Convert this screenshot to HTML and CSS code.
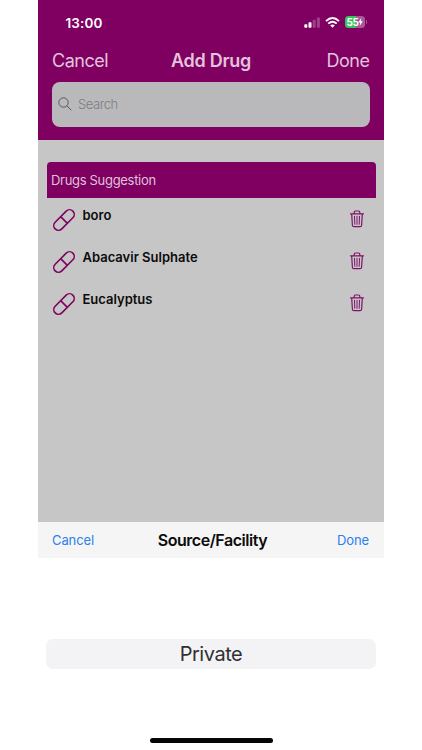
FILE: index.html
```html
<!DOCTYPE html>
<html lang="en">
<head>
<meta charset="utf-8">
<title>Add Drug</title>
<link rel="stylesheet" href="styles.css">
</head>
<body>
<svg class="defs" width="0" height="0" aria-hidden="true">
  <symbol id="pill" viewBox="0 0 24 24">
    <g transform="rotate(-45 12 12)" fill="none" stroke="currentColor" stroke-width="1.6">
      <rect x="-0.5" y="7.300" width="25" height="9.400" rx="4.700"/>
      <path d="M12 7.300v9.400"/>
    </g>
  </symbol>
  <symbol id="trash" viewBox="0 0 16 18">
    <g fill="none" stroke="currentColor" stroke-width="1.2" stroke-linecap="round" stroke-linejoin="round">
      <path d="M1.5 3.8h13M5.2 3.6V2.2Q5.200 1 6.400 1h3.200Q10.800 1 10.800 2.200v1.400M2.700 4l.7 11.200q.1 1.500 1.500 1.500h6.200q1.400 0 1.500-1.500L13.300 4"/>
      <path stroke-width="1" d="M5.500 6.300l.3 8M8 6.300v8M10.500 6.300l-.3 8"/>
    </g>
  </symbol>
</svg>
<main class="phone">
  <header class="header">
    <div class="status">
      <span class="time">13:00</span>
      <div class="indicators">
        <svg class="signal" width="16" height="11" viewBox="0 0 16 11" fill="#fff">
          <rect x="0.300" y="7.300" width="3" height="3.500" rx="0.800"/>
          <rect x="4.500" y="5.300" width="3" height="5.500" rx="0.800"/>
          <rect x="8.700" y="2.800" width="3" height="8" rx="0.800" opacity=".25"/>
          <rect x="12.900" y="0.500" width="3" height="10.300" rx="0.800" opacity=".25"/>
        </svg>
        <svg class="wifi" width="15" height="11" viewBox="0 0 15 11" fill="none" stroke="#fff" stroke-width="1.900">
          <path d="M1 4.100Q7.500-1.900 14 4.100M3.300 6.600Q7.500 2.800 11.700 6.600"/>
          <path fill="#fff" stroke="none" d="M5.200 8.300Q7.500 6.500 9.800 8.300L7.500 10.700Z"/>
        </svg>
        <div class="battery">
          <span>55</span>
          <svg width="5" height="8" viewBox="0 0 5 8"><path fill="#fff" d="M3.300 0L.2 4.500h2L1.600 8 4.900 3.300h-2z"/></svg>
        </div>
        <i class="battery-tip"></i>
      </div>
    </div>
    <nav class="nav">
      <span class="nav-cancel">Cancel</span>
      <h1>Add Drug</h1>
      <span class="nav-done">Done</span>
    </nav>
    <div class="search">
      <svg width="14" height="14" viewBox="0 0 14 14" fill="none" stroke="#58585c" stroke-width="1"><circle cx="5.500" cy="5.500" r="4.700"/><path d="M9 9l4.300 4.200"/></svg>
      <span>Search</span>
    </div>
  </header>
  <section class="content">
    <h2>Drugs Suggestion</h2>
    <ul>
      <li><svg class="pill"><use href="#pill"/></svg><span>boro</span><svg class="trash"><use href="#trash"/></svg></li>
      <li><svg class="pill"><use href="#pill"/></svg><span>Abacavir Sulphate</span><svg class="trash"><use href="#trash"/></svg></li>
      <li><svg class="pill"><use href="#pill"/></svg><span>Eucalyptus</span><svg class="trash"><use href="#trash"/></svg></li>
    </ul>
  </section>
  <div class="toolbar">
    <span class="action">Cancel</span>
    <strong>Source/Facility</strong>
    <span class="action">Done</span>
  </div>
  <div class="picker"><div class="option">Private</div></div>
  <div class="home"></div>
</main>
</body>
</html>
```

FILE: styles.css
```css
* { box-sizing: border-box; }
body { margin: 0; background: #fff; font-family: Inter, "Liberation Sans", sans-serif; }
.defs { display: block; height: 0; }
.phone { width: 346px; height: 750px; margin-left: 38px; display: flex; flex-direction: column; }
span, h1, h2, strong { white-space: nowrap; }
.header { height: 140px; background: #800062; flex: none; }
.status { height: 41px; padding: 4px 17px 0 27.500px; display: flex; justify-content: space-between; align-items: center; }
.time { color: #fff; font-size: 13.500px; font-weight: 600; letter-spacing: 0.150px; }
.indicators { display: flex; align-items: center; margin-top: -1px; }
.wifi { margin-left: 5px; }
.battery { width: 20px; height: 12px; margin-left: 5px; border-radius: 3.500px; background: linear-gradient(90deg, #38c45a 56%, #a8579a 56%); color: #fff; display: flex; align-items: center; justify-content: center; font-size: 10px; font-weight: 700; letter-spacing: -0.500px; }
.battery-tip { width: 1px; height: 4px; margin-left: 1px; border-radius: 0 1px 1px 0; background: #a8579a; }
.nav { height: 38px; padding: 0 14px; display: grid; grid-template-columns: 1fr auto 1fr; align-items: center; color: #e2c4db; font-size: 18px; }
.nav h1 { margin: 0; font-size: 18px; font-weight: 600; letter-spacing: -0.300px; }
.nav-cancel { letter-spacing: -0.500px; }
.nav-done { text-align: right; letter-spacing: -0.500px; padding-right: 0.500px; }
.search { height: 45px; margin: 3px 14px 0; padding-left: 6px; border-radius: 8px; background: #b9b9bb; color: #7c7c7f; display: flex; align-items: center; gap: 6px; font-size: 13px; font-weight: 300; letter-spacing: -0.450px; }
.search svg { margin-top: -1px; }
.search span { margin-top: -1px; }
.content { height: 382px; padding: 22px 8.500px 0; background: #c6c6c6; flex: none; }
.content h2 { height: 35.500px; margin: 0; padding-left: 4.500px; line-height: 36px; border-radius: 4px 4px 0 0; background: #800062; color: #dfc2d8; font-size: 13px; font-weight: 400; letter-spacing: -0.310px; }
.content ul { list-style: none; margin: 0; padding: 0; }
.content li { height: 42.300px; padding: 9px 11px 0 6px; display: flex; align-items: flex-start; color: #0c0c0c; font-size: 13px; font-weight: 600; line-height: 16px; }
.content li span { flex: 1; margin-left: 6px; }
.pill { width: 24px; height: 24px; margin: 1px 1px 0 -1px; color: #800062; overflow: visible; }
.trash { width: 16px; height: 18px; margin-top: 3px; color: #80116a; }
.toolbar { height: 36px; padding: 0 14px; background: #f5f5f5; display: grid; grid-template-columns: 1fr auto 1fr; align-items: center; flex: none; }
.toolbar strong { color: #0b0b0b; font-size: 16px; font-weight: 600; letter-spacing: -0.450px; padding-left: 3px; }
.action { color: #2b80ec; font-size: 13px; letter-spacing: -0.100px; }
.action:last-child { text-align: right; padding-right: 1px; }
.picker { padding: 81px 8px 0; }
.option { height: 30px; border-radius: 7px; background: #f3f3f5; color: #303033; text-align: center; font-size: 20px; line-height: 30px; letter-spacing: -0.450px; }
.home { width: 123px; height: 5px; margin: 69px auto 0; border-radius: 3px; background: #050505; }
```
